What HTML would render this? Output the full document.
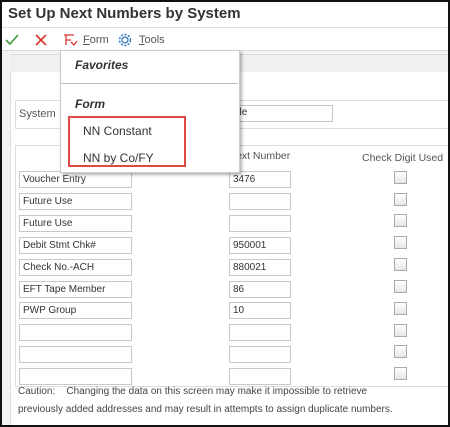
<!DOCTYPE html><html><head><style>
body{margin:0;width:450px;height:427px;overflow:hidden;font-family:"Liberation Sans",sans-serif;}
.wrap{position:absolute;left:0;top:0;width:450px;height:427px;background:#f4f4f4;overflow:hidden}
.abs{position:absolute}
.inp{position:absolute;border:1px solid #c8c8c8;background:#fff;font-size:10px;color:#333;line-height:16px;padding-left:3px;box-sizing:border-box;height:17px}
.cb{position:absolute;width:11px;height:11px;border:1px solid #aaa;background:linear-gradient(#fff,#e6e6e6)}
</style></head><body><div class="wrap">
<div class="abs" style="left:0;top:0;width:450px;height:27px;background:#fff;border-bottom:1px solid #ddd"></div>
<div class="abs" style="left:8px;top:5px;font-size:15px;font-weight:bold;color:#333">Set Up Next Numbers by System</div>
<div class="abs" style="left:0;top:28px;width:450px;height:22px;background:#fff;border-bottom:1px solid #ddd"></div>
<svg class="abs" style="left:4px;top:32px" width="170" height="16">
<path d="M2 8 L6 12 L14 3" stroke="#3a9a3a" stroke-width="1.6" fill="none"/>
<path d="M32 3 L42 13 M42 3 L32 13" stroke="#d33" stroke-width="1.6"/>
<path d="M60 3 H70 M62 3 V13 M62 8 H67 M67 10 L70 13 L73 9" stroke="#d33" stroke-width="1.3" fill="none"/>
<circle cx="121" cy="8" r="3" stroke="#3b7bbf" stroke-width="1.3" fill="none"/>
<circle cx="121" cy="8" r="5.5" stroke="#3b7bbf" stroke-width="1.5" stroke-dasharray="2.2 1.4" fill="none"/>
</svg>
<div class="abs" style="left:83px;top:34px;font-size:11px;color:#555"><u>F</u>orm</div>
<div class="abs" style="left:139px;top:34px;font-size:11px;color:#555"><u>T</u>ools</div>
<div class="abs" style="left:10px;top:54px;width:440px;height:17px;background:#eef0f2;border-top:1px solid #ddd;border-bottom:1px solid #ddd"></div>
<div class="abs" style="left:10px;top:72px;width:440px;height:355px;background:#fff;border-left:1px solid #ddd"></div>
<div class="abs" style="left:15px;top:100px;width:435px;height:27px;border:1px solid #ddd;border-right:none"></div>
<div class="abs" style="left:19px;top:108px;font-size:11px;color:#555">System</div>
<div class="inp" style="left:227px;top:105px;width:106px"></div>
<div class="abs" style="left:234px;top:107px;font-size:10px;color:#333">ble</div>
<div class="abs" style="left:15px;top:145px;width:435px;height:240px;border:1px solid #ddd;border-right:none"></div>
<div class="abs" style="left:236px;top:150px;font-size:10.5px;color:#555">ext Number</div>
<div class="abs" style="left:362px;top:152px;font-size:10.5px;color:#555">Check Digit Used</div>
<div class="inp" style="left:19px;top:171px;width:113px">Voucher Entry</div>
<div class="inp" style="left:19px;top:193px;width:113px">Future Use</div>
<div class="inp" style="left:19px;top:215px;width:113px">Future Use</div>
<div class="inp" style="left:19px;top:237px;width:113px">Debit Stmt Chk#</div>
<div class="inp" style="left:19px;top:259px;width:113px">Check No.-ACH</div>
<div class="inp" style="left:19px;top:281px;width:113px">EFT Tape Member</div>
<div class="inp" style="left:19px;top:302px;width:113px">PWP Group</div>
<div class="inp" style="left:19px;top:324px;width:113px"></div>
<div class="inp" style="left:19px;top:346px;width:113px"></div>
<div class="inp" style="left:19px;top:368px;width:113px"></div>
<div class="inp" style="left:229px;top:171px;width:62px">3476</div>
<div class="inp" style="left:229px;top:193px;width:62px"></div>
<div class="inp" style="left:229px;top:215px;width:62px"></div>
<div class="inp" style="left:229px;top:237px;width:62px">950001</div>
<div class="inp" style="left:229px;top:259px;width:62px">880021</div>
<div class="inp" style="left:229px;top:281px;width:62px">86</div>
<div class="inp" style="left:229px;top:302px;width:62px">10</div>
<div class="inp" style="left:229px;top:324px;width:62px"></div>
<div class="inp" style="left:229px;top:346px;width:62px"></div>
<div class="inp" style="left:229px;top:368px;width:62px"></div>
<div class="cb" style="left:394px;top:171px"></div><div class="cb" style="left:394px;top:193px"></div><div class="cb" style="left:394px;top:214px"></div><div class="cb" style="left:394px;top:236px"></div><div class="cb" style="left:394px;top:258px"></div><div class="cb" style="left:394px;top:280px"></div><div class="cb" style="left:394px;top:302px"></div><div class="cb" style="left:394px;top:324px"></div><div class="cb" style="left:394px;top:345px"></div><div class="cb" style="left:394px;top:367px"></div>
<div class="abs" style="left:18px;top:383px;font-size:10px;color:#444;line-height:18px;white-space:nowrap">Caution:&nbsp;&nbsp;&nbsp; Changing the data on this screen may make it impossible to retrieve<br>previously added addresses and may result in attempts to assign duplicate numbers.</div>
<div class="abs" style="left:60px;top:50px;width:178px;height:121px;background:#fff;border:1px solid #ccc;box-shadow:2px 2px 3px rgba(0,0,0,.3)"></div>
<div class="abs" style="left:75px;top:58px;font-size:12px;font-weight:bold;font-style:italic;color:#333">Favorites</div>
<div class="abs" style="left:61px;top:83px;width:177px;border-top:1px solid #bbb"></div>
<div class="abs" style="left:75px;top:97px;font-size:12px;font-weight:bold;font-style:italic;color:#333">Form</div>
<div class="abs" style="left:68px;top:116px;width:114px;height:47px;border:2px solid #e04a45"></div>
<div class="abs" style="left:83px;top:124px;font-size:12px;color:#333">NN Constant</div>
<div class="abs" style="left:83px;top:151px;font-size:12px;color:#333">NN by Co/FY</div>
<div class="abs" style="left:0;top:0;width:446px;height:423px;border:2px solid #111"></div>
</div></body></html>
